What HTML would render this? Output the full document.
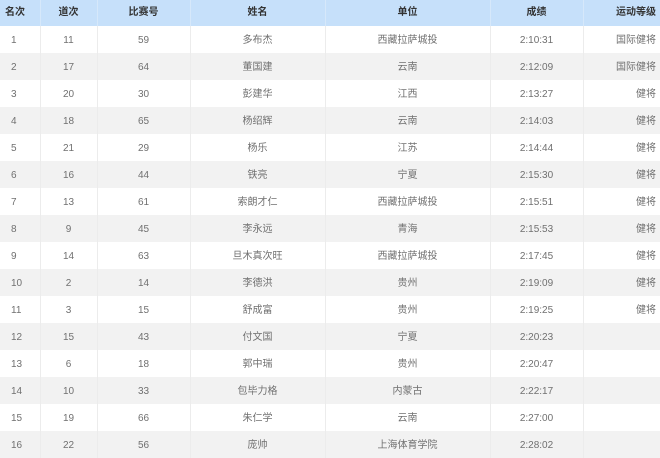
<!DOCTYPE html>
<html><head><meta charset="utf-8"><style>
body{margin:0;width:660px;height:456px;overflow:hidden;background:#fff;font-family:"Liberation Sans","Noto Sans CJK SC",sans-serif;}
table{border-collapse:collapse;width:660px;table-layout:fixed;}
th{background:#c6e0fa;height:26px;line-height:26px;font-size:10px;color:#333;font-weight:bold;text-align:center;padding:0;border-right:1px solid #d6e8fa;}
td{height:25px;line-height:25px;font-size:10px;color:#707070;text-align:center;padding:2px 0 0 0;border-right:1px solid #ececec;vertical-align:middle;}
tr:nth-child(even) td{background:#f2f2f2;}
th:first-child{text-align:left;padding-left:5px;}
td:first-child{text-align:left;padding-left:11px;}
th:last-child,td:last-child{text-align:right;padding-right:4px;border-right:none;}
</style></head><body>
<table>
<colgroup><col style="width:40px"><col style="width:57px"><col style="width:93px"><col style="width:135px"><col style="width:165px"><col style="width:93px"><col style="width:77px"></colgroup>
<thead><tr><th>名次</th><th>道次</th><th>比赛号</th><th>姓名</th><th>单位</th><th>成绩</th><th>运动等级</th></tr></thead>
<tbody>
<tr><td>1</td><td>11</td><td>59</td><td>多布杰</td><td>西藏拉萨城投</td><td>2:10:31</td><td>国际健将</td></tr>
<tr><td>2</td><td>17</td><td>64</td><td>董国建</td><td>云南</td><td>2:12:09</td><td>国际健将</td></tr>
<tr><td>3</td><td>20</td><td>30</td><td>彭建华</td><td>江西</td><td>2:13:27</td><td>健将</td></tr>
<tr><td>4</td><td>18</td><td>65</td><td>杨绍辉</td><td>云南</td><td>2:14:03</td><td>健将</td></tr>
<tr><td>5</td><td>21</td><td>29</td><td>杨乐</td><td>江苏</td><td>2:14:44</td><td>健将</td></tr>
<tr><td>6</td><td>16</td><td>44</td><td>铁亮</td><td>宁夏</td><td>2:15:30</td><td>健将</td></tr>
<tr><td>7</td><td>13</td><td>61</td><td>索朗才仁</td><td>西藏拉萨城投</td><td>2:15:51</td><td>健将</td></tr>
<tr><td>8</td><td>9</td><td>45</td><td>李永远</td><td>青海</td><td>2:15:53</td><td>健将</td></tr>
<tr><td>9</td><td>14</td><td>63</td><td>旦木真次旺</td><td>西藏拉萨城投</td><td>2:17:45</td><td>健将</td></tr>
<tr><td>10</td><td>2</td><td>14</td><td>李德洪</td><td>贵州</td><td>2:19:09</td><td>健将</td></tr>
<tr><td>11</td><td>3</td><td>15</td><td>舒成富</td><td>贵州</td><td>2:19:25</td><td>健将</td></tr>
<tr><td>12</td><td>15</td><td>43</td><td>付文国</td><td>宁夏</td><td>2:20:23</td><td></td></tr>
<tr><td>13</td><td>6</td><td>18</td><td>郭中瑞</td><td>贵州</td><td>2:20:47</td><td></td></tr>
<tr><td>14</td><td>10</td><td>33</td><td>包毕力格</td><td>内蒙古</td><td>2:22:17</td><td></td></tr>
<tr><td>15</td><td>19</td><td>66</td><td>朱仁学</td><td>云南</td><td>2:27:00</td><td></td></tr>
<tr><td>16</td><td>22</td><td>56</td><td>庞帅</td><td>上海体育学院</td><td>2:28:02</td><td></td></tr>
</tbody></table>
</body></html>
